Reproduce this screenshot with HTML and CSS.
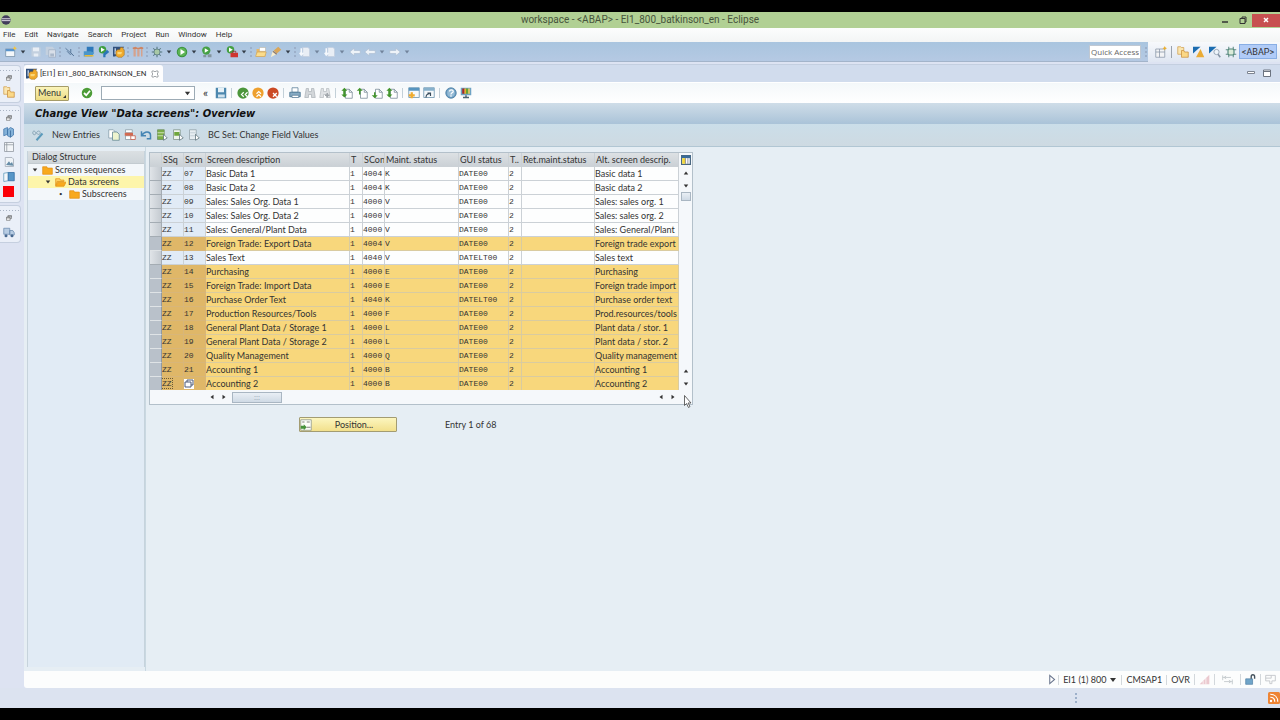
FILE: index.html
```html
<!DOCTYPE html>
<html lang="en">
<head>
    <meta charset="UTF-8">
    <meta name="viewport" content="width=device-width, initial-scale=1.0">
    <title>workspace - &lt;ABAP&gt; - EI1_800_batkinson_en - Eclipse</title>
    <link rel="stylesheet" href="styles.css">
</head>
<body>
    <svg class="sprite" aria-hidden="true">
        <symbol id="dd" viewBox="0 0 8 8"><path d="M1 2h6L4 6z" fill="currentColor"/></symbol>
        <symbol id="new" viewBox="0 0 16 16"><rect x="1" y="4" width="12" height="10" fill="#f4f7fa" stroke="#7890a8"/><path d="M1 4h12v3H1z" fill="#5a94cc"/><path d="M13 0l1 2 2 1-2 1-1 2-1-2-2-1 2-1z" fill="#f2c544"/></symbol>
        <symbol id="disk" viewBox="0 0 16 16"><path d="M2 2h12v12H2z" fill="currentColor"/><path d="M4 2h8v5H4zM5 10h6v4H5z" fill="#e8eef5"/></symbol>
        <symbol id="disks" viewBox="0 0 16 16"><path d="M1 1h9l3 3v8H1z" fill="currentColor"/><path d="M5 5h9v10H5z" fill="#d8dfe9" stroke="#9fafc3"/><path d="M7 10h5v4H7z" fill="#aab8ca"/></symbol>
        <symbol id="nopin" viewBox="0 0 16 16"><path d="M2 3l11 10M9 4v5l4 4M4 7l5 5" stroke="#58779a" fill="none" stroke-width="1.3"/></symbol>
        <symbol id="blueopen" viewBox="0 0 16 16"><path d="M5 1h9v8H5z" fill="#2d78ba"/><path d="M1 7h9l5 2-3 5H1z" fill="#4b96c9"/><path d="M2 12h12v2H2z" fill="#e9b937"/></symbol>
        <symbol id="runcheck" viewBox="0 0 16 16"><circle cx="6" cy="5" r="5" fill="#3f9e41"/><path d="M4 2l5 3-5 3z" fill="#fff"/><path d="M7 10l5-5 3 3-5 4v3H7z" fill="#2b76b8"/></symbol>
        <symbol id="sap" viewBox="0 0 16 16"><path d="M0 1h15l-5 6-7 7H0z" fill="#31507c"/><path d="M2 3h2v8H2z" fill="#b7c9df"/><path d="M4 7l2-2h3l1-3h3l1 3h1v7l-3 3H7l-3-2z" fill="#f0ab2d" stroke="#9c6b20" stroke-width=".7"/><path d="M6 8h6l-1 3H6z" fill="#fbd779"/></symbol>
        <symbol id="pillars" viewBox="0 0 16 16"><path d="M2 3h3v11H2zM7 2h3v12H7zM12 3h2v11h-2z" fill="#d5a28d"/><path d="M1 2l4-1 3 2 4-2 3 1v2H1z" fill="#cc8564"/></symbol>
        <symbol id="bug" viewBox="0 0 16 16"><path d="M8 1v14M1 8h14M3 3l10 10M13 3L3 13" stroke="#55777f" stroke-width="1.4"/><circle cx="8" cy="8" r="4" fill="#a8c8a6" stroke="#55777f"/></symbol>
        <symbol id="debugpersp" viewBox="0 0 16 16"><path d="M5 1v14M11 1v14M1 5h14M1 11h14" stroke="#5f8c84" stroke-width="1.4"/><rect x="4" y="4" width="8" height="8" rx="2" fill="#dcebd9" stroke="#4f8577" stroke-width="1.500"/></symbol>
        <symbol id="run" viewBox="0 0 16 16"><circle cx="8" cy="8" r="7" fill="#38923c"/><circle cx="8" cy="8" r="5.8" fill="#5db455"/><path d="M6 4l6 4-6 4z" fill="#fff"/></symbol>
        <symbol id="runext" viewBox="0 0 16 16"><circle cx="7" cy="6" r="5.5" fill="#45a044"/><path d="M5 3l5 3-5 3z" fill="#fff"/><path d="M3 12h4v3H3zM9 11h5v4H9z" fill="#83959e"/></symbol>
        <symbol id="runbox" viewBox="0 0 16 16"><circle cx="6" cy="5" r="5" fill="#45a044"/><path d="M4 2l5 3-5 3z" fill="#fff"/><path d="M6 9h10v6H6z" fill="#cf3430"/><path d="M9 9V7h4v2" stroke="#942020" fill="none"/></symbol>
        <symbol id="folder" viewBox="0 0 16 16"><path d="M2 4h5l1 2h6v8H2z" fill="#e8b865"/><path d="M6 2h8v5H6z" fill="#fff" stroke="#b3a78d" stroke-width=".6"/><path d="M1 13l2-5h12l-2 6H1z" fill="#fbdc8b" stroke="#c89746" stroke-width=".7"/></symbol>
        <symbol id="torch" viewBox="0 0 16 16"><path d="M1 15l3-9 6 4z" fill="#f8efcf"/><path d="M5 6l6-5 4 4-6 5z" fill="#d9a659"/><path d="M4 7l5 4" stroke="#8d7a70" stroke-width="2"/></symbol>
        <symbol id="note" viewBox="0 0 16 16"><path d="M5 2h7l2 2v10H5z" fill="#e9eef5" stroke="#c1cedf"/><path d="M3 3v9m-2-3l2 3 3-3" stroke="#f5f8fc" stroke-width="2" fill="none"/></symbol>
        <symbol id="left" viewBox="0 0 16 16"><path d="M1 8l6-5v3h8v4H7v3z" fill="#eef3f8" stroke="#a9bad0" stroke-width=".8"/></symbol>
        <symbol id="right" viewBox="0 0 16 16"><path d="M15 8L9 3v3H1v4h8v3z" fill="#eef3f8" stroke="#a9bad0" stroke-width=".8"/></symbol>
        <symbol id="restore" viewBox="0 0 16 16"><path d="M5 6V2h10v7h-4M5 3h10" fill="none" stroke="#555" stroke-width="1.6"/><path d="M1 6h10v8H1zM1 8h10" fill="#fff" stroke="#555" stroke-width="1.6"/></symbol>
        <symbol id="folders" viewBox="0 0 16 16"><path d="M1 1h4l1 1h3v9H1z" fill="#fae6b0" stroke="#d0a050"/><path d="M6 6h3l1 2h5v7H6z" fill="#fbd886" stroke="#c88f3d"/></symbol>
        <symbol id="books" viewBox="0 0 16 16"><path d="M1 4l5-2v9l-5 2zM6 5l4-3 4 2v8l-4 3-4-2z" fill="#83b1d8" stroke="#4076ab"/><path d="M10 6v9" stroke="#34669a"/></symbol>
        <symbol id="grid" viewBox="0 0 16 16"><path d="M2 2h12v12H2zM2 5h12M5 2v12" fill="#f3f5f8" stroke="#8d949e"/></symbol>
        <symbol id="picture" viewBox="0 0 16 16"><path d="M3 2h9l2 2v10H3z" fill="#eff3f7" stroke="#9da6b1"/><path d="M4 12l4-5 2 3 2-2 2 5z" fill="#668da8"/></symbol>
        <symbol id="bookopen" viewBox="0 0 16 16"><path d="M1 3l6-1v11l-6 1z" fill="#f3f7fa" stroke="#5a98b9"/><path d="M7 2h8v11H7z" fill="#5796c7" stroke="#2c6aa1"/></symbol>
        <symbol id="truck" viewBox="0 0 16 16"><path d="M1 3h8v8H1zM9 6h4l2 3v3H9z" fill="#b7cce3" stroke="#6a89ad"/><circle cx="4" cy="13" r="2" fill="#486990"/><circle cx="12" cy="13" r="2" fill="#486990"/></symbol>
        <symbol id="check" viewBox="0 0 16 16"><circle cx="8" cy="8" r="7" fill="#4c9c37"/><path d="M4 8l3 3 5-6" stroke="#fff" stroke-width="2.4" fill="none"/></symbol>
        <symbol id="save" viewBox="0 0 16 16"><path d="M1 1h14v14H1z" fill="#4d88ae"/><path d="M4 1h8v6H4z" fill="#e6f1f7"/><path d="M4 10h9v4H4z" fill="#d0e2ed"/></symbol>
        <symbol id="back" viewBox="0 0 16 16"><circle cx="8" cy="8" r="7.5" fill="#4c963b"/><path d="M9 7l-3 3 3 3M14 7l-3 3 3 3" stroke="#fff" stroke-width="1.6" fill="none"/></symbol>
        <symbol id="exit" viewBox="0 0 16 16"><circle cx="8" cy="8" r="7.5" fill="#eea02e"/><path d="M6 9l3-3 3 3M6 13l3-3 3 3" stroke="#fff" stroke-width="1.6" fill="none"/></symbol>
        <symbol id="cancel" viewBox="0 0 16 16"><circle cx="8" cy="8" r="7.5" fill="#cb4a24"/><path d="M8 8l5 5M13 8l-5 5" stroke="#fff" stroke-width="1.8"/></symbol>
        <symbol id="print" viewBox="0 0 16 16"><path d="M4 1h8v6H4z" fill="#fff" stroke="#577b95"/><path d="M1 7h14v6H1z" fill="#87abc3" stroke="#3e6b8a"/><path d="M4 11h9v3H4z" fill="#fff" stroke="#577b95"/></symbol>
        <symbol id="find" viewBox="0 0 16 16"><path d="M3 2h3v4h4V2h3l2 12h-5v-4H6v4H1z" fill="#d3d7da" stroke="#aeb4b9"/></symbol>
        <symbol id="findnext" viewBox="0 0 16 16"><path d="M3 2h3v4h4V2h3l2 12h-5v-4H6v4H1z" fill="#dfe2e5" stroke="#b8bdc1"/><path d="M11 8v6M8 11h6" stroke="#a1a7ac" stroke-width="2"/></symbol>
        <symbol id="page" viewBox="0 0 16 16"><path d="M6 3h5l4 4v8H6z" fill="#fff" stroke="#718491"/><path d="M11 3v4h4" fill="none" stroke="#718491"/></symbol>
        <symbol id="first" viewBox="0 0 16 16"><use href="#page"/><path d="M4.500 1l4 4H6v5h2.500l-4 4-4-4H3V5H.5z" fill="#43952c"/></symbol>
        <symbol id="prev" viewBox="0 0 16 16"><use href="#page"/><path d="M5 1l4 4H6v5H4V5H1z" fill="#43952c"/></symbol>
        <symbol id="next" viewBox="0 0 16 16"><use href="#page"/><path d="M5 15l4-4H6V7H4v4H1z" fill="#43952c"/></symbol>
        <symbol id="session" viewBox="0 0 16 16"><path d="M1 1h14v13H1z" fill="#f5f9fb" stroke="#648daa"/><path d="M1 1h14v4H1z" fill="#5795bf"/><path d="M5 7v8M1 11h8" stroke="#efac2f" stroke-width="3"/></symbol>
        <symbol id="shortcut" viewBox="0 0 16 16"><path d="M1 1h14v13H1z" fill="#f5f9fb" stroke="#648daa"/><path d="M1 1h14v4H1z" fill="#87b1cc"/><path d="M4 14c0-4 2-5 5-5M6 8h4v4" stroke="#34495a" stroke-width="1.5" fill="none"/></symbol>
        <symbol id="help" viewBox="0 0 16 16"><circle cx="8" cy="8" r="7" fill="#6b9dc1" stroke="#467ba1"/><circle cx="8" cy="8" r="5" fill="#94bad5"/><path d="M6 6c0-3 5-3 5 0 0 2-3 1-3 4M8 11v2" stroke="#fff" stroke-width="1.600" fill="none"/></symbol>
        <symbol id="monitor" viewBox="0 0 16 16"><path d="M1 1h14v10H1z" fill="#6fa3c4"/><path d="M3 2h3v7H3z" fill="#a92825"/><path d="M6 2h2v7H6z" fill="#efad25"/><path d="M8 2h3v7H8z" fill="#6aa331"/><path d="M11 2h2v7h-2z" fill="#f3cd55"/><path d="M7 11h2v2h3v2H4v-2h3z" fill="#4c6472"/></symbol>
        <symbol id="glasses" viewBox="0 0 16 16"><path d="M1 5c0-3 3-3 4 0s-4 4-4 0M6 5c1-3 5-3 5 0s-4 3-5 0" fill="none" stroke="#7796a8"/><path d="M5 14l8-9 2 2-8 9z" fill="#5b9abb"/></symbol>
        <symbol id="copy" viewBox="0 0 16 16"><path d="M1 1h6l2 2v9H1z" fill="#fff" stroke="#829aa8"/><path d="M6 4h6l3 3v8H6z" fill="#eef4cf" stroke="#5c8190"/></symbol>
        <symbol id="delete" viewBox="0 0 16 16"><path d="M2 1h9v4H2zM2 9h9v5H2z" fill="#fff" stroke="#8497a2"/><path d="M1 5h11v4H1z" fill="#d26950"/><path d="M9 9h6v5H9z" fill="#fff" stroke="#c2513d"/></symbol>
        <symbol id="undo" viewBox="0 0 16 16"><path d="M2 3v6h6M3 8c3-6 11-5 11 0v5H9" fill="none" stroke="#4585b4" stroke-width="2"/></symbol>
        <symbol id="selall" viewBox="0 0 16 16"><path d="M2 1h9v13H2z" fill="#7cae46" stroke="#6c8c5e"/><path d="M2 5h9M2 9h9" stroke="#e8f2dc"/><path d="M10 7l5 5-5 3z" fill="#fff" stroke="#596f77"/></symbol>
        <symbol id="selblock" viewBox="0 0 16 16"><path d="M2 1h9v13H2z" fill="#eff4ec" stroke="#7e9188"/><path d="M3 4h7v5H3z" fill="#6fa63c"/><path d="M10 7l5 5-5 3z" fill="#fff" stroke="#596f77"/></symbol>
        <symbol id="deselall" viewBox="0 0 16 16"><path d="M2 1h9v13H2z" fill="#e6edf1" stroke="#90a0a8"/><path d="M3 5h7M3 9h7" stroke="#b8c6cd"/><path d="M10 7l5 5-5 3z" fill="#fff" stroke="#596f77"/></symbol>
        <symbol id="openpersp" viewBox="0 0 16 16"><path d="M1 4h12v11H1zM1 8h12M6 4v11" fill="#f3f4f6" stroke="#8794a5"/><path d="M13 0l1 2 2 1-2 1-1 2-1-2-2-1 2-1z" fill="#eaae2e"/></symbol>
        <symbol id="warnpersp" viewBox="0 0 16 16"><path d="M0 1h10L0 10z" fill="#1b6cb0"/><path d="M10 4l5 11H4z" fill="#eaab35"/></symbol>
        <symbol id="zoompersp" viewBox="0 0 16 16"><path d="M0 1h10L0 10z" fill="#1b6cb0"/><circle cx="10" cy="8" r="3.500" fill="#eef4fa" stroke="#8594a5"/><path d="M12 11l3 4" stroke="#8594a5" stroke-width="2"/></symbol>
        <symbol id="fold" viewBox="0 0 16 13"><path d="M1 1h6l1 2h7v9H1z" fill="#f8a91d" stroke="#e08d11"/></symbol>
        <symbol id="foldopen" viewBox="0 0 16 13"><path d="M1 1h6l1 2h5v2H3l-2 6z" fill="#fdd064" stroke="#e08d11"/><path d="M1 12l3-6h12l-3 6z" fill="#f8a91d" stroke="#e08d11"/></symbol>
        <symbol id="config" viewBox="0 0 16 16"><path d="M1 1h14v14H1z" fill="#fff" stroke="#4a6780" stroke-width="2"/><path d="M1 1h14v4H1z" fill="#386b9a"/><path d="M2 5h5v9H2z" fill="#f6db38"/><path d="M7 5v9M11 5v9" stroke="#557"/></symbol>
        <symbol id="position" viewBox="0 0 16 16"><path d="M1 1h14v14H1z" fill="#fcfdf7" stroke="#87918a"/><path d="M3 4h3M9 4h4M9 11h5" stroke="#555"/><path d="M1 9h4V7l4 4-4 4v-2H1z" fill="#47923b"/></symbol>
        <symbol id="play" viewBox="0 0 16 16"><path d="M4 2l7 6-7 6z" fill="#fff" stroke="#68748c" stroke-width="1.500"/></symbol>
        <symbol id="lock" viewBox="0 0 16 16"><path d="M1 7h10v8H1z" fill="#70a5c9" stroke="#4e80a4"/><path d="M9 7V4c0-4 5-4 5 0v3" fill="none" stroke="#44525d" stroke-width="2"/></symbol>
        <symbol id="signal" viewBox="0 0 16 16"><path d="M1 15L15 1v14z" fill="#ebc9cf"/><path d="M6 10v5M10 6v9" stroke="#fff"/></symbol>
        <symbol id="swap" viewBox="0 0 16 16"><path d="M1 2v7M1 5h12M15 8v7M3 11h12M6 3L3 5l3 2M10 9l3 2-3 2" fill="none" stroke="#c4c9cc" stroke-width="1.300"/></symbol>
        <symbol id="layout" viewBox="0 0 16 16"><path d="M1 2h14v8h-5v4H7v-4H1zM1 6h8V2" fill="none" stroke="#c2c6ca" stroke-width="1.300"/></symbol>
        <symbol id="rss" viewBox="0 0 16 16"><rect width="16" height="16" rx="2" fill="#ee8434"/><circle cx="4" cy="12" r="1.600" fill="#fff"/><path d="M3 7c4 0 6 2 6 6M3 3c6 0 10 4 10 10" fill="none" stroke="#fff" stroke-width="1.600"/></symbol>
    </svg>

    <div class="window">
        <header class="titlebar">
            <svg class="ico eclipse" viewBox="0 0 16 16"><circle cx="8" cy="8" r="7.500" fill="#423d5c"/><path d="M1 6h14M1 9h14" stroke="#e4e1ee" stroke-width="1.500"/></svg>
            <h1>workspace - &lt;ABAP&gt; - EI1_800_batkinson_en - Eclipse</h1>
            <div class="winbtns">
                <button aria-label="Minimize"><svg class="glyph" viewBox="0 0 8 8"><path d="M1 6h6" stroke="#333" stroke-width="1.500"/></svg></button>
                <button aria-label="Restore"><svg class="glyph" viewBox="0 0 8 8"><path d="M1 2.500h5v5H1zM3 2V1h4v5H6" fill="none" stroke="#333"/></svg></button>
                <button class="close" aria-label="Close"><svg class="glyph" viewBox="0 0 8 8"><path d="M2 2l4 4M6 2L2 6" stroke="#fff" stroke-width="1.500"/></svg></button>
            </div>
        </header>

        <nav class="menubar">
            <button>File</button><button>Edit</button><button>Navigate</button><button>Search</button><button>Project</button><button>Run</button><button>Window</button><button>Help</button>
        </nav>

        <div class="toolbar">
            <div class="tools">
                <button class="tb" aria-label="New"><svg class="ico"><use href="#new"/></svg></button>
                <button class="dd" aria-label="New menu"><svg><use href="#dd"/></svg></button>
                <button class="tb off" aria-label="Save"><svg class="ico"><use href="#disk"/></svg></button>
                <button class="tb off" aria-label="Save All"><svg class="ico"><use href="#disks"/></svg></button>
                <span class="dots"></span>
                <button class="tb" aria-label="Skip Breakpoints"><svg class="ico"><use href="#nopin"/></svg></button>
                <span class="dots"></span>
                <button class="tb" aria-label="Open Object"><svg class="ico"><use href="#blueopen"/></svg></button>
                <button class="tb" aria-label="Run Object"><svg class="ico"><use href="#runcheck"/></svg></button>
                <button class="tb" aria-label="SAP GUI"><svg class="ico"><use href="#sap"/></svg></button>
                <span class="dots"></span>
                <button class="tb" aria-label="Activate"><svg class="ico"><use href="#pillars"/></svg></button>
                <span class="dots"></span>
                <button class="tb" aria-label="Debug"><svg class="ico"><use href="#bug"/></svg></button>
                <button class="dd" aria-label="Debug menu"><svg><use href="#dd"/></svg></button>
                <button class="tb" aria-label="Run"><svg class="ico"><use href="#run"/></svg></button>
                <button class="dd" aria-label="Run menu"><svg><use href="#dd"/></svg></button>
                <button class="tb" aria-label="Coverage"><svg class="ico"><use href="#runext"/></svg></button>
                <button class="dd" aria-label="Coverage menu"><svg><use href="#dd"/></svg></button>
                <button class="tb" aria-label="External Tools"><svg class="ico"><use href="#runbox"/></svg></button>
                <button class="dd" aria-label="External Tools menu"><svg><use href="#dd"/></svg></button>
                <span class="dots"></span>
                <button class="tb" aria-label="Open"><svg class="ico"><use href="#folder"/></svg></button>
                <button class="tb" aria-label="Search"><svg class="ico"><use href="#torch"/></svg></button>
                <button class="dd" aria-label="Search menu"><svg><use href="#dd"/></svg></button>
                <span class="dots"></span>
                <button class="tb" aria-label="Next Annotation"><svg class="ico"><use href="#note"/></svg></button>
                <button class="dd dim" aria-label="Next Annotation menu"><svg><use href="#dd"/></svg></button>
                <button class="tb" aria-label="Previous Annotation"><svg class="ico"><use href="#note"/></svg></button>
                <button class="dd dim" aria-label="Previous Annotation menu"><svg><use href="#dd"/></svg></button>
                <button class="tb" aria-label="Last Edit"><svg class="ico"><use href="#left"/></svg></button>
                <button class="tb" aria-label="Back"><svg class="ico"><use href="#left"/></svg></button>
                <button class="dd dim" aria-label="Back menu"><svg><use href="#dd"/></svg></button>
                <button class="tb" aria-label="Forward"><svg class="ico"><use href="#right"/></svg></button>
                <button class="dd dim" aria-label="Forward menu"><svg><use href="#dd"/></svg></button>
            </div>
            <input class="quick" type="text" placeholder="Quick Access" aria-label="Quick Access">
            <span class="dots"></span>
            <div class="perspectives">
                <button class="tb" aria-label="Open Perspective"><svg class="ico"><use href="#openpersp"/></svg></button>
                <span class="bar"></span>
                <button class="tb" aria-label="Resource"><svg class="ico"><use href="#folders"/></svg></button>
                <button class="tb" aria-label="ABAP Profiling"><svg class="ico"><use href="#warnpersp"/></svg></button>
                <button class="tb" aria-label="ABAP Connectivity"><svg class="ico"><use href="#zoompersp"/></svg></button>
                <button class="tb" aria-label="Debug perspective"><svg class="ico"><use href="#debugpersp"/></svg></button>
                <button class="abap">&lt;ABAP&gt;</button>
            </div>
        </div>

        <div class="workbench">
            <aside class="trim">
                <div class="stack">
                    <button aria-label="Restore"><svg class="mini"><use href="#restore"/></svg></button>
                    <button aria-label="Project Explorer"><svg class="ico"><use href="#folders"/></svg></button>
                </div>
                <div class="stack">
                    <button aria-label="Restore"><svg class="mini"><use href="#restore"/></svg></button>
                    <button aria-label="Templates"><svg class="ico"><use href="#books"/></svg></button>
                    <button aria-label="Properties"><svg class="ico"><use href="#grid"/></svg></button>
                    <button aria-label="Bookmarks"><svg class="ico"><use href="#picture"/></svg></button>
                    <button aria-label="Feature Explorer"><svg class="ico"><use href="#bookopen"/></svg></button>
                    <button aria-label="Problems"><span class="red"></span></button>
                </div>
                <div class="stack">
                    <button aria-label="Restore"><svg class="mini"><use href="#restore"/></svg></button>
                    <button aria-label="Transport Organizer"><svg class="ico"><use href="#truck"/></svg></button>
                </div>
            </aside>

            <main class="editor">
                <div class="tabs">
                    <div class="tab">
                        <svg class="ico"><use href="#sap"/></svg>
                        <span>[EI1] EI1_800_BATKINSON_EN</span>
                        <button aria-label="Close tab"><svg class="glyph" viewBox="0 0 8 8"><path d="M1 1h2l1 1 1-1h2v2L6 4l1 1v2H5L4 6 3 7H1V5l1-1-1-1z" fill="#fff" stroke="#8a8f96" stroke-width=".8"/></svg></button>
                    </div>
                    <div class="tabbtns">
                        <button aria-label="Minimize view"><svg class="glyph" viewBox="0 0 8 8"><path d="M.5 2.500h7v2h-7z" fill="#fff" stroke="#7d8490"/></svg></button>
                        <button aria-label="Maximize view"><svg class="glyph" viewBox="0 0 8 8"><path d="M.5 1h7v6.500h-7zM.5 2.500h7" fill="#fff" stroke="#6d7480"/></svg></button>
                    </div>
                </div>

                <div class="sapbar">
                    <button class="menu">Menu<svg viewBox="0 0 4 4"><path d="M4 0v4H0z" fill="#333"/></svg></button>
                    <button class="tb ok" aria-label="Enter"><svg class="ico"><use href="#check"/></svg></button>
                    <div class="command">
                        <input type="text" aria-label="Command field">
                        <button aria-label="History"><svg><use href="#dd"/></svg></button>
                    </div>
                    <button class="collapse" aria-label="Hide command field">«</button>
                    <button class="tb" aria-label="Save"><svg class="ico"><use href="#save"/></svg></button>
                    <span class="line"></span>
                    <button class="tb" aria-label="Back"><svg class="ico"><use href="#back"/></svg></button>
                    <button class="tb" aria-label="Exit"><svg class="ico"><use href="#exit"/></svg></button>
                    <button class="tb" aria-label="Cancel"><svg class="ico"><use href="#cancel"/></svg></button>
                    <span class="line"></span>
                    <button class="tb" aria-label="Print"><svg class="ico"><use href="#print"/></svg></button>
                    <button class="tb" aria-label="Find"><svg class="ico"><use href="#find"/></svg></button>
                    <button class="tb" aria-label="Find next"><svg class="ico"><use href="#findnext"/></svg></button>
                    <span class="line"></span>
                    <button class="tb" aria-label="First page"><svg class="ico"><use href="#first"/></svg></button>
                    <button class="tb" aria-label="Previous page"><svg class="ico"><use href="#prev"/></svg></button>
                    <button class="tb" aria-label="Next page"><svg class="ico"><use href="#next"/></svg></button>
                    <button class="tb" aria-label="Last page"><svg class="ico"><use href="#first"/></svg></button>
                    <span class="line"></span>
                    <button class="tb" aria-label="New session"><svg class="ico"><use href="#session"/></svg></button>
                    <button class="tb" aria-label="Create shortcut"><svg class="ico"><use href="#shortcut"/></svg></button>
                    <span class="line"></span>
                    <button class="tb" aria-label="Help"><svg class="ico"><use href="#help"/></svg></button>
                    <button class="tb" aria-label="Customize layout"><svg class="ico"><use href="#monitor"/></svg></button>
                </div>

                <h2>Change View "Data screens": Overview</h2>

                <div class="appbar">
                    <button aria-label="Display/Change"><svg class="ico"><use href="#glasses"/></svg></button>
                    <button class="text">New Entries</button>
                    <button aria-label="Copy As"><svg class="ico"><use href="#copy"/></svg></button>
                    <button aria-label="Delete"><svg class="ico"><use href="#delete"/></svg></button>
                    <button aria-label="Undo"><svg class="ico"><use href="#undo"/></svg></button>
                    <button aria-label="Select All"><svg class="ico"><use href="#selall"/></svg></button>
                    <button aria-label="Select Block"><svg class="ico"><use href="#selblock"/></svg></button>
                    <button aria-label="Deselect All"><svg class="ico"><use href="#deselall"/></svg></button>
                    <button class="text">BC Set: Change Field Values</button>
                </div>

                <div class="content">
                    <section class="tree">
                        <h3>Dialog Structure</h3>
                        <ul>
                            <li class="lvl1"><svg class="exp"><use href="#dd"/></svg><svg class="fold"><use href="#fold"/></svg>Screen sequences</li>
                            <li class="lvl2 current"><svg class="exp"><use href="#dd"/></svg><svg class="fold"><use href="#foldopen"/></svg>Data screens</li>
                            <li class="lvl3"><span class="exp">•</span><svg class="fold"><use href="#fold"/></svg>Subscreens</li>
                        </ul>
                    </section>

                    <section class="detail">
                        <div class="grid">
                            <table>
                                <colgroup>
                                    <col class="c-sel"><col class="c-ssq"><col class="c-scrn"><col class="c-desc"><col class="c-t"><col class="c-scon"><col class="c-maint"><col class="c-gui"><col class="c-t2"><col class="c-ret"><col class="c-alt">
                                </colgroup>
                                <thead>
                                    <tr><th></th><th>SSq</th><th>Scrn</th><th>Screen description</th><th>T</th><th>SCon</th><th>Maint. status</th><th>GUI status</th><th>T..</th><th>Ret.maint.status</th><th>Alt. screen descrip.</th></tr>
                                </thead>
                                <tbody>
                                    <tr><td></td><td>ZZ</td><td>07</td><td>Basic Data 1</td><td>1</td><td>4004</td><td>K</td><td>DATE00</td><td>2</td><td></td><td>Basic data 1</td></tr>
                                    <tr><td></td><td>ZZ</td><td>08</td><td>Basic Data 2</td><td>1</td><td>4004</td><td>K</td><td>DATE00</td><td>2</td><td></td><td>Basic data 2</td></tr>
                                    <tr><td></td><td>ZZ</td><td>09</td><td>Sales: Sales Org. Data 1</td><td>1</td><td>4000</td><td>V</td><td>DATE00</td><td>2</td><td></td><td>Sales: sales org. 1</td></tr>
                                    <tr><td></td><td>ZZ</td><td>10</td><td>Sales: Sales Org. Data 2</td><td>1</td><td>4000</td><td>V</td><td>DATE00</td><td>2</td><td></td><td>Sales: sales org. 2</td></tr>
                                    <tr><td></td><td>ZZ</td><td>11</td><td>Sales: General/Plant Data</td><td>1</td><td>4000</td><td>V</td><td>DATE00</td><td>2</td><td></td><td>Sales: General/Plant</td></tr>
                                    <tr class="on"><td></td><td>ZZ</td><td>12</td><td>Foreign Trade: Export Data</td><td>1</td><td>4004</td><td>V</td><td>DATE00</td><td>2</td><td></td><td>Foreign trade export</td></tr>
                                    <tr><td></td><td>ZZ</td><td>13</td><td>Sales Text</td><td>1</td><td>4040</td><td>V</td><td>DATELT00</td><td>2</td><td></td><td>Sales text</td></tr>
                                    <tr class="on"><td></td><td>ZZ</td><td>14</td><td>Purchasing</td><td>1</td><td>4000</td><td>E</td><td>DATE00</td><td>2</td><td></td><td>Purchasing</td></tr>
                                    <tr class="on"><td></td><td>ZZ</td><td>15</td><td>Foreign Trade: Import Data</td><td>1</td><td>4000</td><td>E</td><td>DATE00</td><td>2</td><td></td><td>Foreign trade import</td></tr>
                                    <tr class="on"><td></td><td>ZZ</td><td>16</td><td>Purchase Order Text</td><td>1</td><td>4040</td><td>K</td><td>DATELT00</td><td>2</td><td></td><td>Purchase order text</td></tr>
                                    <tr class="on"><td></td><td>ZZ</td><td>17</td><td>Production Resources/Tools</td><td>1</td><td>4000</td><td>F</td><td>DATE00</td><td>2</td><td></td><td>Prod.resources/tools</td></tr>
                                    <tr class="on"><td></td><td>ZZ</td><td>18</td><td>General Plant Data / Storage 1</td><td>1</td><td>4000</td><td>L</td><td>DATE00</td><td>2</td><td></td><td>Plant data / stor. 1</td></tr>
                                    <tr class="on"><td></td><td>ZZ</td><td>19</td><td>General Plant Data / Storage 2</td><td>1</td><td>4000</td><td>L</td><td>DATE00</td><td>2</td><td></td><td>Plant data / stor. 2</td></tr>
                                    <tr class="on"><td></td><td>ZZ</td><td>20</td><td>Quality Management</td><td>1</td><td>4000</td><td>Q</td><td>DATE00</td><td>2</td><td></td><td>Quality management</td></tr>
                                    <tr class="on"><td></td><td>ZZ</td><td>21</td><td>Accounting 1</td><td>1</td><td>4000</td><td>B</td><td>DATE00</td><td>2</td><td></td><td>Accounting 1</td></tr>
                                    <tr class="on"><td></td><td><span class="focus">ZZ</span></td><td><button class="f4" aria-label="Input help"><svg viewBox="0 0 10 10"><path d="M3 3V1h6v5H7M1 3h6v5H1z" fill="#fff" stroke="#4c5a78"/></svg></button></td><td>Accounting 2</td><td>1</td><td>4000</td><td>B</td><td>DATE00</td><td>2</td><td></td><td>Accounting 2</td></tr>
                                </tbody>
                            </table>
                            <div class="vscroll">
                                <button aria-label="Table settings"><svg class="cfg"><use href="#config"/></svg></button>
                                <button aria-label="Scroll up"><svg class="up"><use href="#dd"/></svg></button>
                                <button aria-label="Scroll down"><svg><use href="#dd"/></svg></button>
                                <span class="thumb"></span>
                                <span class="track"></span>
                                <button aria-label="Page up"><svg class="up"><use href="#dd"/></svg></button>
                                <button aria-label="Page down"><svg><use href="#dd"/></svg></button>
                            </div>
                            <div class="hscroll">
                                <button aria-label="Scroll left"><svg class="lt"><use href="#dd"/></svg></button>
                                <button aria-label="Scroll right"><svg class="rt"><use href="#dd"/></svg></button>
                                <span class="thumb">:::</span>
                                <span class="track"></span>
                                <button aria-label="Column left"><svg class="lt"><use href="#dd"/></svg></button>
                                <button aria-label="Column right"><svg class="rt"><use href="#dd"/></svg></button>
                            </div>
                            <svg class="pointer" viewBox="0 0 8 13"><path d="M.5.5v10l2-2 2 4 1.500-1-2-3.500H7z" fill="#fff" stroke="#444" stroke-width=".8"/></svg>
                        </div>
                        <div class="footer">
                            <button class="position"><svg class="ico"><use href="#position"/></svg><span>Position...</span></button>
                            <span>Entry 1 of 68</span>
                        </div>
                    </section>
                </div>

                <footer class="status">
                    <svg class="ico"><use href="#play"/></svg>
                    <span>EI1 (1) 800 <svg class="arrow"><use href="#dd"/></svg></span>
                    <span>CMSAP1</span>
                    <span>OVR</span>
                    <span class="cell"><svg class="ico"><use href="#signal"/></svg></span>
                    <span class="cell wide"><svg class="ico"><use href="#swap"/></svg></span>
                    <span class="cell"><svg class="ico"><use href="#lock"/></svg></span>
                    <span class="cell"><svg class="ico"><use href="#layout"/></svg></span>
                </footer>
            </main>
        </div>

        <div class="bottom">
            <span class="dots"></span>
            <svg class="ico"><use href="#rss"/></svg>
        </div>
    </div>
</body>
</html>
```

FILE: styles.css
```css
* {
    box-sizing: border-box;
}
body {
    margin: 0;
    padding: 12px 0;
    background: #000;
    color: #333;
    font: 9px/12px Roboto, sans-serif;
}
button {
    padding: 0;
    border: 0;
    background: none;
    color: inherit;
    font: inherit;
    white-space: nowrap;
}
svg {
    display: block;
    flex: none;
}
h1, h2, h3, ul {
    margin: 0;
    padding: 0;
}
.sprite {
    display: none;
}
.ico {
    width: 12px;
    height: 12px;
}
.glyph {
    width: 8px;
    height: 8px;
}
.window {
    display: flex;
    flex-direction: column;
    min-height: calc(100vh - 24px);
    background: #dce3f0;
}

/* Eclipse frame */
.titlebar {
    display: grid;
    grid-template-columns: 1fr auto 1fr;
    align-items: center;
    height: 16px;
    background: #b1d094;
}
.eclipse {
    width: 10px;
    height: 10px;
    margin-left: 1px;
}
.titlebar h1 {
    color: #47543c;
    font: 10px/16px Roboto, sans-serif;
}
.winbtns {
    display: flex;
    justify-content: flex-end;
}
.winbtns button {
    display: flex;
    justify-content: center;
    width: 18px;
    height: 13px;
    padding-top: 2px;
}
.winbtns .close {
    width: 28px;
    background: #c75050;
}
.menubar {
    display: flex;
    gap: 9px;
    height: 14px;
    padding-left: 3px;
    background: linear-gradient(#fcfdfd, #f3f5f5);
    font-size: 8px;
}
.toolbar {
    display: flex;
    align-items: center;
    height: 20px;
    background: linear-gradient(#a9c5df, #b5c9e3);
    border-bottom: 1px solid #a3b4ca;
    flex: none;
}
.tools {
    display: flex;
    align-items: center;
    flex: 1;
    padding-left: 3px;
}
.tb {
    display: flex;
    justify-content: center;
    flex: none;
    width: 15px;
}
.off {
    color: #c3d0df;
}
.dd {
    display: flex;
    justify-content: center;
    width: 10px;
    color: #333c48;
}
.dim {
    color: #71839b;
}
.dd svg {
    width: 6px;
    height: 6px;
}
.dots {
    width: 4px;
    height: 12px;
    background: radial-gradient(circle, #9db0ca 1px, transparent 1px) 0 0 / 4px 4px;
}
.quick {
    width: 52px;
    height: 14px;
    padding: 0 1px;
    margin-right: 3px;
    border: 1px solid #c0c8d2;
    background: #fff;
    font: 8px/12px "Open Sans", sans-serif;
}
.quick::placeholder {
    color: #666;
}
.perspectives {
    display: flex;
    align-items: center;
    gap: 1px;
    height: 20px;
    padding: 0 3px 0 5px;
    background: linear-gradient(#f7f9fc, #dfe6f2);
}
.bar {
    width: 1px;
    height: 12px;
    margin: 0 2px;
    background: #9aa2ad;
}
.abap {
    width: 38px;
    height: 15px;
    border: 1px solid #88aee4;
    background: #b0cbf7;
}
.workbench {
    display: flex;
    flex: 1;
    padding-top: 2px;
    background: #dde3f2;
}
.trim {
    width: 24px;
    padding-top: 1px;
}
.stack {
    display: flex;
    flex-direction: column;
    align-items: center;
    width: 21px;
    margin-bottom: 2px;
    padding: 6px 3px 3px 0;
    border: 1px solid #c5cfdf;
    border-left: 0;
    border-radius: 0 4px 4px 0;
    background: radial-gradient(circle, #aab4c4 1px, transparent 1px) 2px 3px / 3px 3px repeat-x, #eaeff8;
}
.stack button {
    display: flex;
    align-items: center;
    height: 15px;
}
.stack button:first-child {
    height: 12px;
}
.mini {
    width: 6px;
    height: 6px;
}
.red {
    width: 11px;
    height: 11px;
    background: #fb0007;
}
.editor {
    display: flex;
    flex-direction: column;
    flex: 1;
    min-width: 0;
}
.tabs {
    display: flex;
    justify-content: space-between;
    height: 19px;
    border-top: 1px solid #c4cfe0;
    border-bottom: 1px solid #fff;
    background: #d1dced;
}
.tab {
    display: flex;
    align-items: center;
    gap: 2px;
    padding: 0 4px 0 2px;
    border-radius: 3px 3px 0 0;
    background: #fdfdfe;
    font-size: 8px;
}
.tab button {
    margin-left: 2px;
}
.tabbtns {
    display: flex;
    gap: 8px;
    padding: 4px 9px 0 0;
}
.tabbtns button {
    height: 8px;
}

/* SAP GUI */
.sapbar, .appbar, .content, .status {
    font-family: Lato, sans-serif;
}
.sapbar {
    display: flex;
    align-items: center;
    height: 20px;
    padding-left: 11px;
    background: linear-gradient(#f4f8fa, #fff);
}
.menu {
    display: flex;
    align-items: center;
    justify-content: space-between;
    width: 34px;
    height: 15px;
    padding: 0 2px;
    border: 1px solid #a59c68;
    border-radius: 1px;
    background: linear-gradient(#fbf5bb, #ecdb83);
}
.menu svg {
    width: 3px;
    height: 3px;
    margin-top: 6px;
}
.ok {
    margin: 0 7px 0 10px;
}
.command {
    display: flex;
    width: 94px;
    height: 14px;
    border: 1px solid #9dabb5;
    background: #fff;
}
.command input {
    flex: 1;
    min-width: 0;
    padding: 0 2px;
    border: 0;
    font: inherit;
}
.command button {
    display: flex;
    align-items: center;
    width: 10px;
}
.command svg {
    width: 7px;
    height: 7px;
}
.collapse {
    width: 18px;
    padding-left: 3px;
    font-size: 12px;
}
.line {
    width: 1px;
    height: 10px;
    margin: 0 3px;
    background: #c3d0d8;
}
h2 {
    height: 21px;
    padding-left: 11px;
    background: linear-gradient(#cfdde8, #aac3d8);
    color: #111;
    font: italic bold 10px/21px "DejaVu Sans", sans-serif;
}
.appbar {
    display: flex;
    align-items: center;
    height: 23px;
    padding-left: 6px;
    border-bottom: 1px solid #b1c6d3;
    background: linear-gradient(#cbdee9, #cedae2);
}
.appbar button {
    display: flex;
    justify-content: center;
    width: 16px;
}
.appbar .text {
    width: auto;
    padding: 0 6px;
}
.content {
    display: flex;
    flex: 1;
    padding-left: 3px;
    background: #e6eef4;
}
.tree {
    width: 118px;
    margin: 4px 0 4px 0;
    border: 1px solid #c6d3dc;
    border-width: 0 1px 0 1px;
    background: #e1ebf5;
}
.tree h3 {
    height: 13px;
    padding-left: 4px;
    border-bottom: 1px solid #c3cbd0;
    background: linear-gradient(#dbe0e3, #ced5d9);
    font: inherit;
}
.tree ul {
    list-style: none;
}
.tree li {
    display: flex;
    align-items: center;
    height: 12px;
    background: #f3f7fa;
}
.tree .current {
    background: #fdf5ab;
}
.tree .lvl1 {
    padding-left: 4px;
}
.tree .lvl2 {
    padding-left: 17px;
}
.tree .lvl3 {
    padding-left: 31px;
}
.exp {
    width: 6px;
    height: 6px;
    margin-right: 4px;
    font-size: 6px;
    line-height: 6px;
}
.fold {
    width: 11px;
    height: 9px;
    margin-right: 2px;
}
.detail {
    flex: 1;
    min-width: 0;
    padding: 5px 0 0 3px;
    border-left: 1px solid #c9d8e1;
}
.grid {
    position: relative;
    display: grid;
    grid-template-columns: 529px 13px;
    width: 544px;
    border: 1px solid #b3c0ca;
    background: #f5f8fb;
}
table {
    table-layout: fixed;
    width: 100%;
    border-collapse: separate;
    border-spacing: 0;
}
.c-sel { width: 12px; }
.c-ssq { width: 22px; }
.c-scrn { width: 22px; }
.c-desc { width: 144px; }
.c-t { width: 13px; }
.c-scon { width: 22px; }
.c-maint { width: 74px; }
.c-gui { width: 50px; }
.c-t2 { width: 13px; }
.c-ret { width: 73px; }
th, td {
    height: 14px;
    padding: 1px 0 0;
    overflow: hidden;
    border-right: 1px solid #cbd1d6;
    border-bottom: 1px solid #cbd1d6;
    line-height: 12px;
    text-align: left;
    white-space: nowrap;
}
th {
    padding-left: 1px;
    background: linear-gradient(#dde1e4, #cbd1d6);
    font-weight: normal;
}
td {
    background: #fdfefe;
}
td:nth-child(1) {
    border-color: #f1f3f5 #a4acb3 #a4acb3 #f1f3f5;
    background: linear-gradient(90deg, #e0e4e8, #c5cbd1);
}
td:nth-child(2), td:nth-child(3) {
    background: #e1ebf6;
}
td:nth-child(2), td:nth-child(3), td:nth-child(5), td:nth-child(6), td:nth-child(7), td:nth-child(8), td:nth-child(9) {
    font-family: "Liberation Mono", monospace;
    font-size: 8px;
}
.on td {
    border-color: #d9cba0;
    background: #f8d77c;
}
.on td:nth-child(1) {
    border-color: #e0e3e6 #9099a2 #dfe3e6;
    background: #b9c1ca;
}
.on td:nth-child(2), .on td:nth-child(3) {
    border-color: #d8b679;
    background: #dfb768;
}
tbody tr:last-child td {
    height: 13px;
    padding-top: 0;
    border-bottom: 0;
}
.focus {
    outline: 1px dotted #6b5a35;
}
.f4 {
    display: block;
    width: 10px;
    height: 10px;
    background: #fff;
}
.f4 svg {
    width: 10px;
    height: 10px;
}
.vscroll {
    display: flex;
    flex-direction: column;
    align-items: center;
}
.vscroll button {
    display: flex;
    align-items: center;
    justify-content: center;
    width: 13px;
    height: 13px;
}
.vscroll svg, .hscroll svg {
    width: 6px;
    height: 6px;
}
.vscroll .cfg {
    width: 10px;
    height: 10px;
}
.up {
    transform: rotate(180deg);
}
.lt {
    transform: rotate(90deg);
}
.rt {
    transform: rotate(-90deg);
}
.thumb {
    border: 1px solid #a9b6c2;
    background: linear-gradient(#e9eff5, #cfdae5);
}
.vscroll .thumb {
    width: 10px;
    height: 9px;
}
.track {
    flex: 1;
}
.hscroll {
    display: flex;
    align-items: center;
    grid-column: 1 / -1;
    height: 14px;
    padding: 0 13px 0 56px;
}
.hscroll button {
    display: flex;
    justify-content: center;
    width: 12px;
}
.hscroll .thumb {
    width: 50px;
    height: 11px;
    margin-left: 2px;
    color: #9facb8;
    font-size: 8px;
    line-height: 8px;
    text-align: center;
}
.pointer {
    position: absolute;
    right: 0;
    bottom: -4px;
    width: 8px;
    height: 13px;
}
.footer {
    display: flex;
    align-items: center;
    gap: 48px;
    padding: 12px 0 0 150px;
}
.position {
    display: flex;
    align-items: center;
    width: 98px;
    height: 15px;
    padding-left: 0;
    border: 1px solid #a39c72;
    border-radius: 1px;
    background: linear-gradient(#fcf6bf, #f2e08c);
}
.position span {
    flex: 1;
}
.status {
    display: flex;
    align-items: center;
    justify-content: flex-end;
    height: 17px;
    padding-right: 0;
    border-radius: 0 0 0 3px;
    background: #fcfdfd;
}
.status span {
    display: flex;
    align-items: center;
    gap: 3px;
    padding: 0 4px;
    border-left: 1px solid #d3d8dc;
    line-height: 10px;
}
.status .arrow {
    width: 8px;
    height: 8px;
}
.status .ico {
    width: 11px;
    height: 11px;
}
.status .wide {
    padding: 0 7px;
}
.bottom {
    display: flex;
    align-items: center;
    justify-content: flex-end;
    height: 20px;
}
.bottom .dots {
    margin-right: 190px;
}
```
